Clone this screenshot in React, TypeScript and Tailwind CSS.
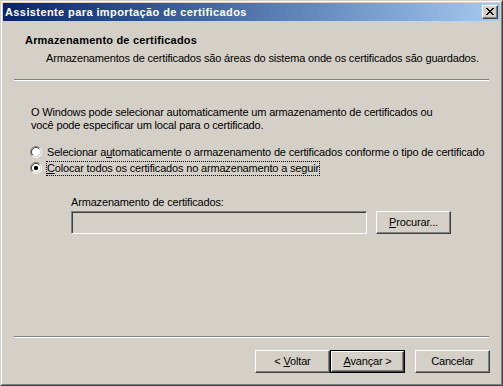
import React from "react";

const Radio = ({ checked }: { checked?: boolean }) => (
  <svg width="12" height="12" viewBox="0 0 12 12" className="shrink-0">
    <circle cx="6" cy="6" r="4.5" fill="#ffffff" />
    <path d="M2.1 9.9 A5.5 5.5 0 0 1 9.9 2.1" fill="none" stroke="#808080" strokeWidth="1" />
    <path d="M9.9 2.1 A5.5 5.5 0 0 1 2.1 9.9" fill="none" stroke="#ffffff" strokeWidth="1" />
    <path d="M2.8 9.2 A4.5 4.5 0 0 1 9.2 2.8" fill="none" stroke="#404040" strokeWidth="1" />
    <path d="M9.2 2.8 A4.5 4.5 0 0 1 2.8 9.2" fill="none" stroke="#d4d0c8" strokeWidth="1" />
    {checked && <rect x="4" y="4" width="4" height="4" rx="1.2" fill="#000000" />}
  </svg>
);

const Button = ({
  children,
  isDefault,
}: {
  children: React.ReactNode;
  isDefault?: boolean;
}) => (
  <div
    className={
      isDefault
        ? "w-[75px] h-[23px] border border-black flex"
        : "w-[75px] h-[23px] flex"
    }
  >
    <div className="flex-1 flex items-center justify-center border border-t-white border-l-white border-r-[#404040] border-b-[#404040] shadow-[inset_-1px_-1px_0_#808080]">
      <span className="leading-[13px]">{children}</span>
    </div>
  </div>
);

export default function App() {
  return (
    <div className="w-[503px] h-[386px] bg-[#d4d0c8] text-black text-[11px] tracking-[-0.17px] font-['Liberation_Sans',Arial,sans-serif]">
      <div className="h-full border border-t-[#d4d0c8] border-l-[#d4d0c8] border-r-[#404040] border-b-[#404040]">
        <div className="h-full border border-t-white border-l-white border-r-[#808080] border-b-[#808080] p-px flex flex-col">
          {/* title bar */}
          <div className="h-[18px] flex items-center justify-between pl-[2px] pr-[2px] bg-gradient-to-r from-[#0a246a] to-[#a6caf0]">
            <span className="text-white font-bold leading-[13px] tracking-[0.4px]">
              Assistente para importação de certificados
            </span>
            <div className="w-[16px] h-[14px] flex items-center justify-center bg-[#d4d0c8] border border-t-white border-l-white border-r-[#404040] border-b-[#404040] shadow-[inset_-1px_-1px_0_#808080]">
              <svg width="8" height="7" viewBox="0 0 8 7" className="mb-px">
                <path
                  d="M0 0h2v1h1v1h2V1h1V0h2v1H7v1H6v1H5v1h1v1h1v1h1v1H6V6H5V5H3v1H2v1H0V6h1V5h1V4h1V3H2V2H1V1H0z"
                  fill="#000000"
                />
              </svg>
            </div>
          </div>

          {/* header */}
          <div className="h-[58px] pt-[13px]">
            <div className="pl-[22px] font-bold leading-[13px] tracking-[0.2px]">
              Armazenamento de certificados
            </div>
            <div className="pl-[43px] mt-[5px] leading-[13px]">
              Armazenamentos de certificados são áreas do sistema onde os
              certificados são guardados.
            </div>
          </div>
          <div className="mx-[11px] h-[2px] border-t border-t-[#808080] border-b border-b-white" />

          {/* body */}
          <div className="flex-1 pl-[27px] pt-[25px]">
            <div className="pl-px leading-[13px]">
              O Windows pode selecionar automaticamente um armazenamento de
              certificados ou
              <br />
              você pode especificar um local para o certificado.
            </div>
            <div className="mt-[12px] h-[16px] flex items-center">
              <Radio />
              <span className="ml-[5px] leading-[13px]">
                Selecionar a<u className="underline-offset-1">u</u>tomaticamente
                o armazenamento de certificados conforme o tipo de certificado
              </span>
            </div>
            <div className="h-[16px] flex items-center">
              <Radio checked />
              <span className="ml-[4px] leading-[15px] outline outline-1 outline-dotted outline-black -outline-offset-1 px-px">
                <u className="underline-offset-1">C</u>olocar todos os
                certificados no armazenamento a seguir
              </span>
            </div>
            <div className="pl-[41px] mt-[20px] leading-[13px]">
              Armazenamento de certificados:
            </div>
            <div className="pl-[41px] mt-[2px] flex items-center">
              <div className="w-[296px] h-[23px] border border-t-[#808080] border-l-[#808080] border-r-white border-b-white shadow-[inset_1px_1px_0_#404040,inset_-1px_-1px_0_#d4d0c8]" />
              <div className="ml-[9px]">
                <Button>
                  <u className="underline-offset-1">P</u>rocurar...
                </Button>
              </div>
            </div>
          </div>
          <div className="mx-[11px] h-[2px] border-t border-t-[#808080] border-b border-b-white" />

          {/* footer */}
          <div className="h-[45px] pt-[12px] pr-[10px] flex justify-end items-start">
            <Button>
              &lt; <u className="underline-offset-1">V</u>oltar
            </Button>
            <Button isDefault>
              <u className="underline-offset-1">A</u>vançar &gt;
            </Button>
            <div className="ml-[10px]">
              <Button>Cancelar</Button>
            </div>
          </div>
        </div>
      </div>
    </div>
  );
}
